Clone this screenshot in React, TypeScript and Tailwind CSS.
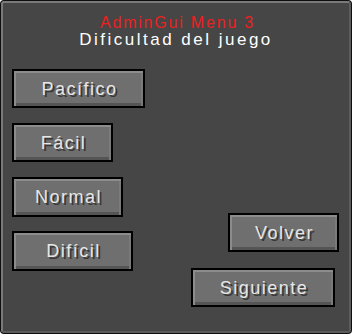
import type { ReactNode } from 'react'

function McButton({ children, className }: { children: ReactNode; className: string }) {
  return (
    <div className={`border-2 border-black bg-[#6f6f6f] shadow-[inset_2px_2px_0_#8c8c8c,inset_-2px_0_0_#7a7a7a,inset_0_-3px_0_#555555] flex items-center justify-center ${className}`}>
      <span className="text-[18px] leading-none tracking-[1.5px] text-[#e6e6e6] [text-shadow:2px_2px_0_#383838] pl-[2px]">
        {children}
      </span>
    </div>
  )
}

export default function App() {
  return (
    <div className="w-[352px] h-[334px] bg-[#0e0e0e] p-px rounded-[4px] font-['Liberation_Sans',Arial,sans-serif]">
      <div className="h-full flex flex-col bg-[#464646] border-2 border-t-[#7a7a7a] border-l-[#7a7a7a] border-b-[#5c5c5c] border-r-[#5c5c5c] rounded-[3px]">
        <div className="pt-[12px] flex flex-col items-center">
          <div className="h-[16px] text-[16px] leading-none tracking-[1.8px] text-[#ec1f1f] pl-[3px]">AdminGui Menu 3</div>
          <div className="h-[17px] text-[17px] leading-none tracking-[2.5px] text-white">Dificultad del juego</div>
        </div>
        <div className="flex-1 flex justify-between">
          <div className="pl-[9px] pt-[21px] flex flex-col items-start">
            <McButton className="w-[133px] h-[39px]">Pacífico</McButton>
            <McButton className="w-[101px] h-[39px] mt-[15px]">Fácil</McButton>
            <McButton className="w-[111px] h-[40px] mt-[15px]">Normal</McButton>
            <McButton className="w-[121px] h-[40px] mt-[14px]">Difícil</McButton>
          </div>
          <div className="pb-[24px] flex flex-col items-end justify-end">
            <McButton className="w-[111px] h-[39px] mr-[10px]">Volver</McButton>
            <McButton className="w-[144px] h-[39px] mt-[16px] mr-[14px]">Siguiente</McButton>
          </div>
        </div>
      </div>
    </div>
  )
}
